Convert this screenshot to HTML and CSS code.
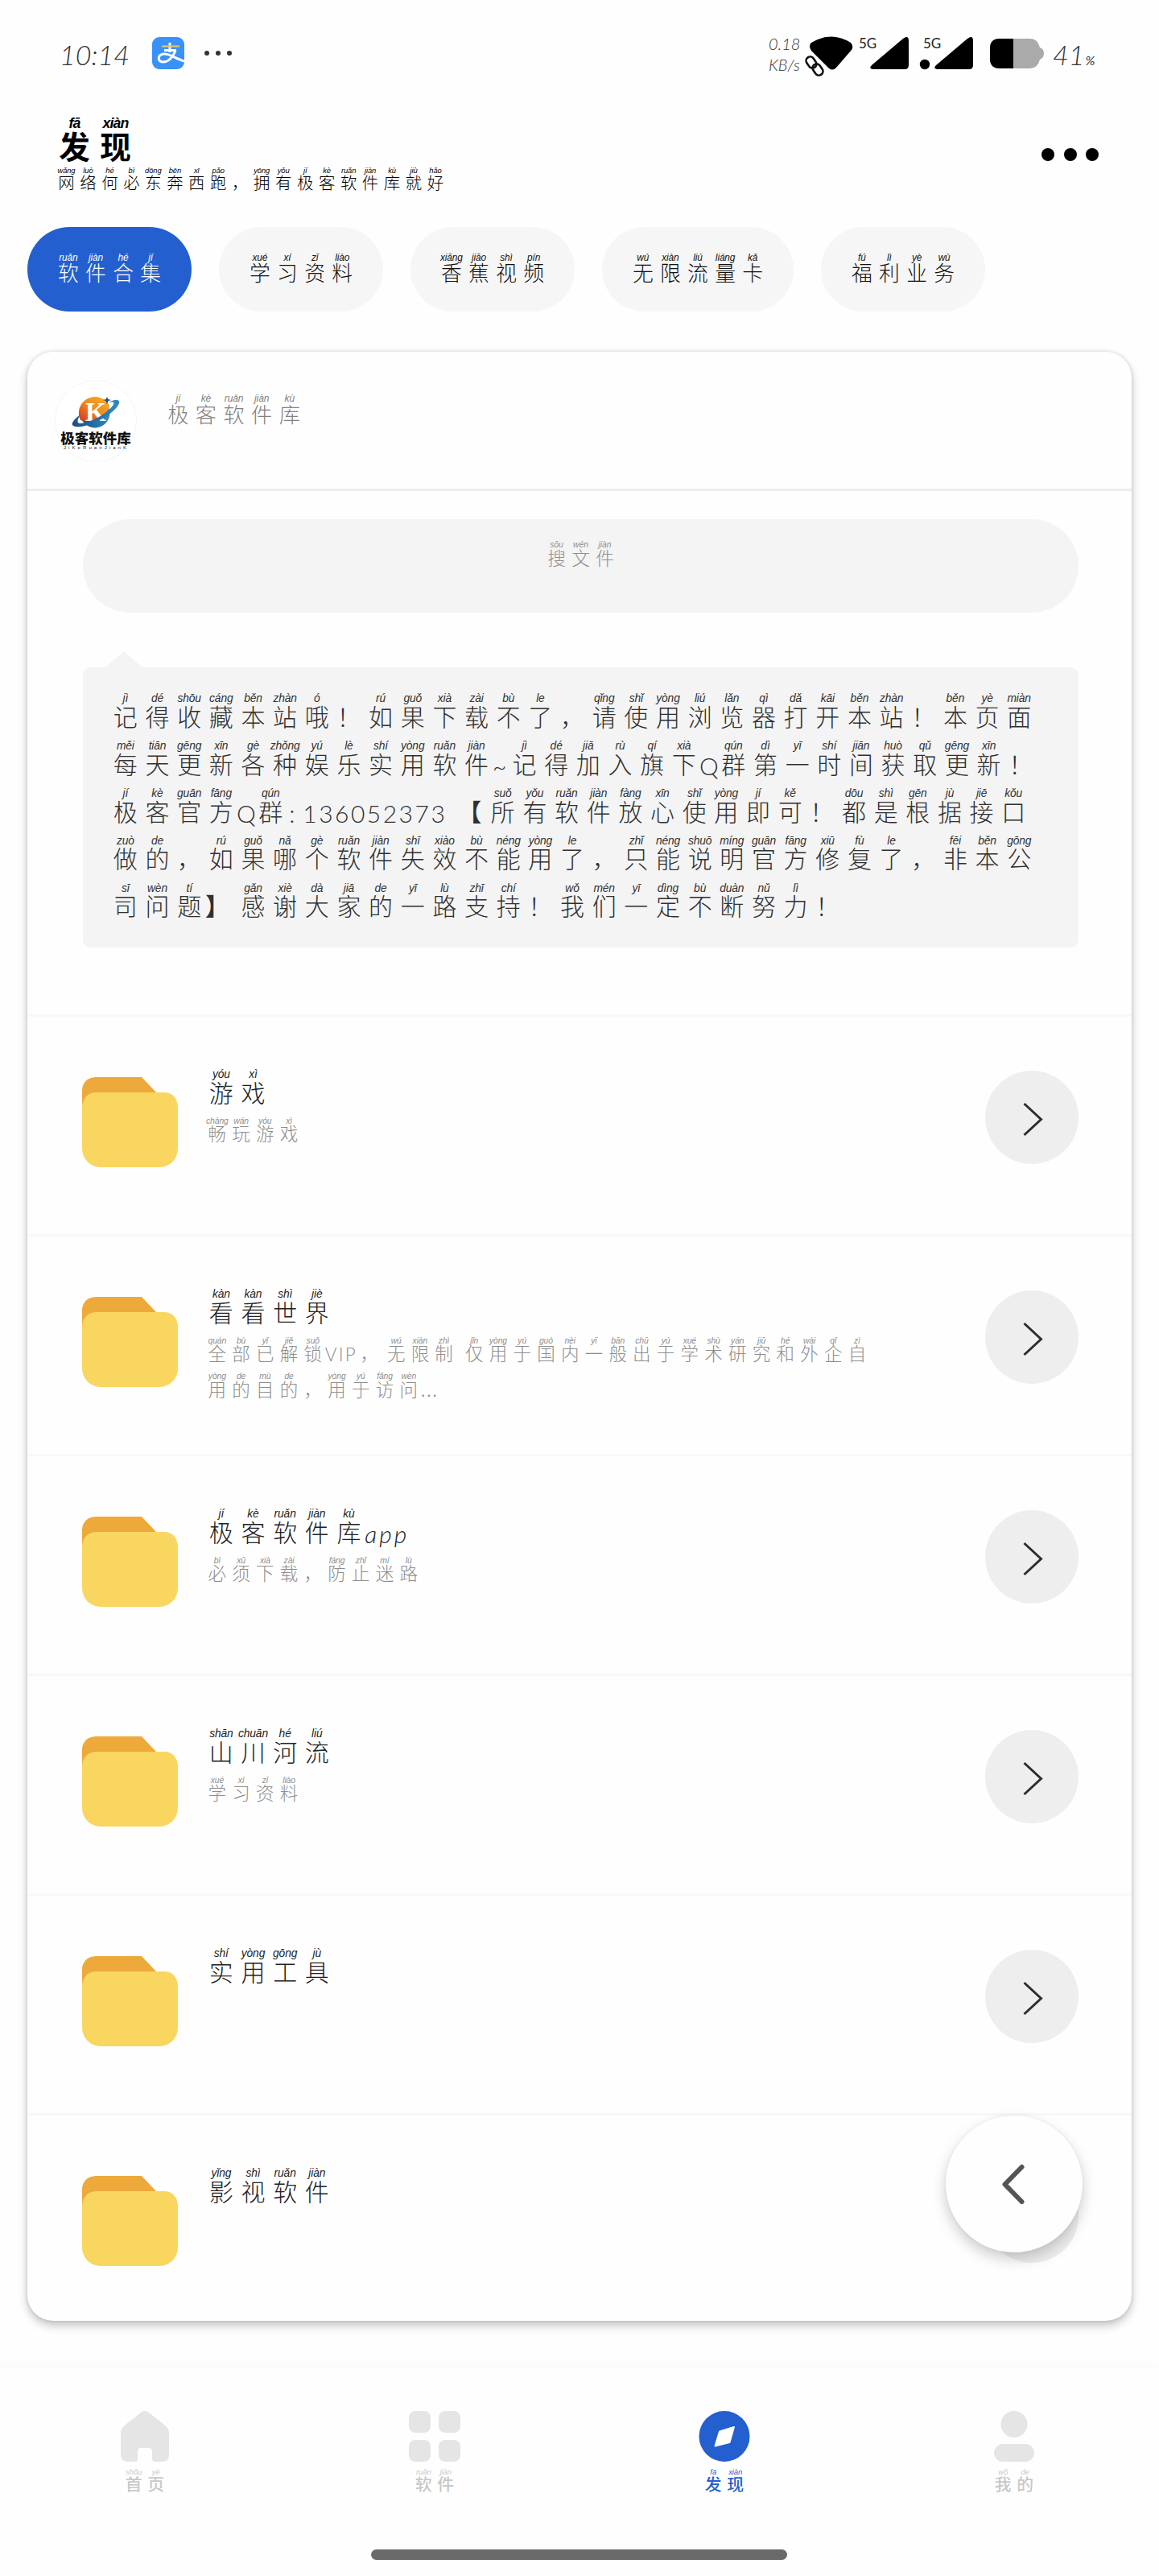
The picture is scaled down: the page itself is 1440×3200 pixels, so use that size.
FILE: index.html
```html
<!DOCTYPE html>
<html lang="zh-CN">
<head>
<meta charset="utf-8">
<title>发现</title>
<link rel="stylesheet" href="styles.css">
</head>
<body>
<div class="screen">
  <div class="status">
    <span class="clock">10:14</span>
    <svg class="pay" viewBox="0 0 40 40"><rect width="40" height="40" rx="9" fill="#3a92f8"/><path d="M22 7V19M15 16.500H30" stroke="#fff" stroke-width="3" fill="none"/><path d="M12 11.500H34" stroke="#e3c565" stroke-width="2.200"/><path d="M29 17C26 25 20 31 14 31C7 31 7 24 11 22C18 18 27 26 40 30" stroke="#fff" stroke-width="3" fill="none"/></svg>
    <span class="more-s"><i></i><i></i><i></i></span>
    <span class="speed"><span>0.18</span><span>KB/s</span></span>
    <svg class="sig" viewBox="0 0 302 56" width="302" height="56">
      <path d="M10 13Q35-2 59 13Q63 17 60 22L41 44Q36 49 31 44L10 23Q6 17 10 13Z" transform="translate(-1 0)"/>
      <g fill="none" stroke="#fefefe" stroke-width="8"><rect x="4" y="30" width="10" height="16" rx="5" transform="rotate(-35 9 38)"/></g>
      <g fill="none" stroke="#111" stroke-width="2.600"><rect x="4" y="30" width="10" height="15" rx="5" transform="rotate(-35 9 37.500)"/><rect x="12" y="39" width="10" height="15" rx="5" transform="rotate(-35 17 46.500)"/></g>
      <text x="68" y="20">5G</text><path d="M84 41L123 8Q130 3 130 11V41Q130 46 125 46H88Q79 46 84 41Z"/>
      <text x="148" y="20">5G</text><circle cx="150" cy="40" r="6.200"/><path d="M164 41L203 8Q210 3 210 11V41Q210 46 205 46H168Q159 46 164 41Z"/>
      <path d="M243 8H281Q290 8 293 19Q298 21 298 26Q298 32 293 34Q290 45 281 45H243Q231 45 231 33V20Q231 8 243 8Z" fill="#aaa"/><path d="M243 8H260V45H243Q231 45 231 33V20Q231 8 243 8Z"/>
    </svg>
    <span class="batt">41<small>%</small></span>
  </div>

  <header class="top">
    <div class="heads">
      <h1 class="py title"><ruby>发<rt>fā</rt></ruby><ruby>现<rt>xiàn</rt></ruby></h1>
      <p class="py sub"><ruby>网<rt>wǎng</rt></ruby><ruby>络<rt>luò</rt></ruby><ruby>何<rt>hé</rt></ruby><ruby>必<rt>bì</rt></ruby><ruby>东<rt>dōng</rt></ruby><ruby>奔<rt>bēn</rt></ruby><ruby>西<rt>xī</rt></ruby><ruby>跑<rt>pǎo</rt></ruby><b>，</b><ruby>拥<rt>yōng</rt></ruby><ruby>有<rt>yǒu</rt></ruby><ruby>极<rt>jí</rt></ruby><ruby>客<rt>kè</rt></ruby><ruby>软<rt>ruǎn</rt></ruby><ruby>件<rt>jiàn</rt></ruby><ruby>库<rt>kù</rt></ruby><ruby>就<rt>jiù</rt></ruby><ruby>好<rt>hǎo</rt></ruby></p>
    </div>
    <span class="menu"><i></i><i></i><i></i></span>
  </header>

  <nav class="chips">
    <a class="py chip on"><ruby>软<rt>ruǎn</rt></ruby><ruby>件<rt>jiàn</rt></ruby><ruby>合<rt>hé</rt></ruby><ruby>集<rt>jí</rt></ruby></a>
    <a class="py chip"><ruby>学<rt>xué</rt></ruby><ruby>习<rt>xí</rt></ruby><ruby>资<rt>zī</rt></ruby><ruby>料<rt>liào</rt></ruby></a>
    <a class="py chip"><ruby>香<rt>xiāng</rt></ruby><ruby>蕉<rt>jiāo</rt></ruby><ruby>视<rt>shì</rt></ruby><ruby>频<rt>pín</rt></ruby></a>
    <a class="py chip"><ruby>无<rt>wú</rt></ruby><ruby>限<rt>xiàn</rt></ruby><ruby>流<rt>liú</rt></ruby><ruby>量<rt>liáng</rt></ruby><ruby>卡<rt>kǎ</rt></ruby></a>
    <a class="py chip"><ruby>福<rt>fú</rt></ruby><ruby>利<rt>lì</rt></ruby><ruby>业<rt>yè</rt></ruby><ruby>务<rt>wù</rt></ruby></a>
  </nav>

  <main class="card">
    <div class="owner">
      <svg class="avatar" viewBox="0 0 102 102" width="102" height="102">
        <defs>
          <linearGradient id="g1" x1="1" y1="0" x2="0" y2="1"><stop offset="0" stop-color="#f7b41f"/><stop offset=".5" stop-color="#f08a24"/><stop offset="1" stop-color="#d8341c"/></linearGradient>
          <linearGradient id="g2" x1="0" y1="0" x2="1" y2="0"><stop offset="0" stop-color="#1d4f86"/><stop offset="1" stop-color="#2f8cc4"/></linearGradient>
        </defs>
        <circle cx="51" cy="51" r="50.500" fill="#fff" stroke="#f4f4f4"/>
        <circle cx="50" cy="41" r="18.500" fill="url(#g2)"/>
        <path d="M32 50A19 19 0 0 1 68 32Q66 42 56 47Q44 53 32 50Z" fill="url(#g1)"/>
        <text class="k" x="38" y="51">K</text>
        <path d="M32 43C22 50 18 57 26 58C43 60 75 42 80 29C82 23 73 24 67 28C73 26 75 28 72 32C64 43 42 54 31 54C27 53 28 49 32 43Z" fill="url(#g2)"/>
        <path d="M65 21L66.500 24L70 25L66.500 26L65 30L63.500 26L60 25L63.500 24Z" fill="#1d4f86"/>
        <text class="lg" x="51" y="79" text-anchor="middle">极客软件库</text>
        <text class="ls" x="11" y="86" textLength="78">JiKeRuanJianK</text>
      </svg>
      <div class="py name"><ruby>极<rt>jí</rt></ruby><ruby>客<rt>kè</rt></ruby><ruby>软<rt>ruǎn</rt></ruby><ruby>件<rt>jiàn</rt></ruby><ruby>库<rt>kù</rt></ruby></div>
    </div>

    <div class="py search"><ruby>搜<rt>sōu</rt></ruby><ruby>文<rt>wén</rt></ruby><ruby>件<rt>jiàn</rt></ruby></div>

    <div class="notice">
      <div class="py"><ruby>记<rt>jì</rt></ruby><ruby>得<rt>dé</rt></ruby><ruby>收<rt>shōu</rt></ruby><ruby>藏<rt>cáng</rt></ruby><ruby>本<rt>běn</rt></ruby><ruby>站<rt>zhàn</rt></ruby><ruby>哦<rt>ó</rt></ruby><b>！</b><ruby>如<rt>rú</rt></ruby><ruby>果<rt>guǒ</rt></ruby><ruby>下<rt>xià</rt></ruby><ruby>载<rt>zài</rt></ruby><ruby>不<rt>bù</rt></ruby><ruby>了<rt>le</rt></ruby><b>，</b><ruby>请<rt>qǐng</rt></ruby><ruby>使<rt>shǐ</rt></ruby><ruby>用<rt>yòng</rt></ruby><ruby>浏<rt>liú</rt></ruby><ruby>览<rt>lǎn</rt></ruby><ruby>器<rt>qì</rt></ruby><ruby>打<rt>dǎ</rt></ruby><ruby>开<rt>kāi</rt></ruby><ruby>本<rt>běn</rt></ruby><ruby>站<rt>zhàn</rt></ruby><b>！</b><ruby>本<rt>běn</rt></ruby><ruby>页<rt>yè</rt></ruby><ruby>面<rt>miàn</rt></ruby></div>
      <div class="py"><ruby>每<rt>měi</rt></ruby><ruby>天<rt>tiān</rt></ruby><ruby>更<rt>gēng</rt></ruby><ruby>新<rt>xīn</rt></ruby><ruby>各<rt>gè</rt></ruby><ruby>种<rt>zhǒng</rt></ruby><ruby>娱<rt>yú</rt></ruby><ruby>乐<rt>lè</rt></ruby><ruby>实<rt>shí</rt></ruby><ruby>用<rt>yòng</rt></ruby><ruby>软<rt>ruǎn</rt></ruby><ruby>件<rt>jiàn</rt></ruby><b class="half">~</b><ruby>记<rt>jì</rt></ruby><ruby>得<rt>dé</rt></ruby><ruby>加<rt>jiā</rt></ruby><ruby>入<rt>rù</rt></ruby><ruby>旗<rt>qí</rt></ruby><ruby>下<rt>xià</rt></ruby><b class="q">Q</b><ruby>群<rt>qún</rt></ruby><ruby>第<rt>dì</rt></ruby><ruby>一<rt>yī</rt></ruby><ruby>时<rt>shí</rt></ruby><ruby>间<rt>jiān</rt></ruby><ruby>获<rt>huò</rt></ruby><ruby>取<rt>qǔ</rt></ruby><ruby>更<rt>gēng</rt></ruby><ruby>新<rt>xīn</rt></ruby><b>！</b></div>
      <div class="py"><ruby>极<rt>jí</rt></ruby><ruby>客<rt>kè</rt></ruby><ruby>官<rt>guān</rt></ruby><ruby>方<rt>fāng</rt></ruby><b class="q">Q</b><ruby>群<rt>qún</rt></ruby><b class="colon">:</b><b class="num">136052373</b><b class="lb">【</b><ruby>所<rt>suǒ</rt></ruby><ruby>有<rt>yǒu</rt></ruby><ruby>软<rt>ruǎn</rt></ruby><ruby>件<rt>jiàn</rt></ruby><ruby>放<rt>fàng</rt></ruby><ruby>心<rt>xīn</rt></ruby><ruby>使<rt>shǐ</rt></ruby><ruby>用<rt>yòng</rt></ruby><ruby>即<rt>jí</rt></ruby><ruby>可<rt>kě</rt></ruby><b>！</b><ruby>都<rt>dōu</rt></ruby><ruby>是<rt>shì</rt></ruby><ruby>根<rt>gēn</rt></ruby><ruby>据<rt>jù</rt></ruby><ruby>接<rt>jiē</rt></ruby><ruby>口<rt>kǒu</rt></ruby></div>
      <div class="py"><ruby>做<rt>zuò</rt></ruby><ruby>的<rt>de</rt></ruby><b>，</b><ruby>如<rt>rú</rt></ruby><ruby>果<rt>guǒ</rt></ruby><ruby>哪<rt>nǎ</rt></ruby><ruby>个<rt>gè</rt></ruby><ruby>软<rt>ruǎn</rt></ruby><ruby>件<rt>jiàn</rt></ruby><ruby>失<rt>shī</rt></ruby><ruby>效<rt>xiào</rt></ruby><ruby>不<rt>bù</rt></ruby><ruby>能<rt>néng</rt></ruby><ruby>用<rt>yòng</rt></ruby><ruby>了<rt>le</rt></ruby><b>，</b><ruby>只<rt>zhǐ</rt></ruby><ruby>能<rt>néng</rt></ruby><ruby>说<rt>shuō</rt></ruby><ruby>明<rt>míng</rt></ruby><ruby>官<rt>guān</rt></ruby><ruby>方<rt>fāng</rt></ruby><ruby>修<rt>xiū</rt></ruby><ruby>复<rt>fù</rt></ruby><ruby>了<rt>le</rt></ruby><b>，</b><ruby>非<rt>fēi</rt></ruby><ruby>本<rt>běn</rt></ruby><ruby>公<rt>gōng</rt></ruby></div>
      <div class="py"><ruby>司<rt>sī</rt></ruby><ruby>问<rt>wèn</rt></ruby><ruby>题<rt>tí</rt></ruby><b class="rb">】</b><ruby>感<rt>gǎn</rt></ruby><ruby>谢<rt>xiè</rt></ruby><ruby>大<rt>dà</rt></ruby><ruby>家<rt>jiā</rt></ruby><ruby>的<rt>de</rt></ruby><ruby>一<rt>yī</rt></ruby><ruby>路<rt>lù</rt></ruby><ruby>支<rt>zhī</rt></ruby><ruby>持<rt>chí</rt></ruby><b>！</b><ruby>我<rt>wǒ</rt></ruby><ruby>们<rt>mén</rt></ruby><ruby>一<rt>yī</rt></ruby><ruby>定<rt>dìng</rt></ruby><ruby>不<rt>bù</rt></ruby><ruby>断<rt>duàn</rt></ruby><ruby>努<rt>nǔ</rt></ruby><ruby>力<rt>lì</rt></ruby><b>！</b></div>
    </div>

    <svg class="defs" width="0" height="0">
      <symbol id="folder" viewBox="0 0 119 112"><path d="M0 40V15Q2 1 17 0H74L92 19V40Z" fill="#eda93a"/><rect y="19" width="119" height="93" rx="23" fill="#f8d660"/><path d="M0 60V36Q2 20 17 19H103Q117 20 119 36V60Z" fill="#f8d660"/></symbol>
      <symbol id="go" viewBox="0 0 116 116"><circle cx="58" cy="58" r="58" fill="#eee"/><path d="M48.500 41L69.500 60.500L48.500 80" fill="none" stroke="#2d2d2d" stroke-width="3"/></symbol>
    </svg>

    <section class="row">
      <svg class="folder"><use href="#folder"/></svg>
      <div class="info">
        <div class="py t"><ruby>游<rt>yóu</rt></ruby><ruby>戏<rt>xì</rt></ruby></div>
        <div class="py d"><ruby>畅<rt>chàng</rt></ruby><ruby>玩<rt>wán</rt></ruby><ruby>游<rt>yóu</rt></ruby><ruby>戏<rt>xì</rt></ruby></div>
      </div>
      <svg class="go"><use href="#go"/></svg>
    </section>
    <section class="row">
      <svg class="folder"><use href="#folder"/></svg>
      <div class="info">
        <div class="py t"><ruby>看<rt>kàn</rt></ruby><ruby>看<rt>kàn</rt></ruby><ruby>世<rt>shì</rt></ruby><ruby>界<rt>jiè</rt></ruby></div>
        <div class="py d"><ruby>全<rt>quán</rt></ruby><ruby>部<rt>bù</rt></ruby><ruby>已<rt>yǐ</rt></ruby><ruby>解<rt>jiě</rt></ruby><ruby>锁<rt>suǒ</rt></ruby><b class="vip">VIP</b><b class="c2">，</b><ruby>无<rt>wú</rt></ruby><ruby>限<rt>xiàn</rt></ruby><ruby>制<rt>zhì</rt></ruby><b class="sp"></b><ruby>仅<rt>jǐn</rt></ruby><ruby>用<rt>yòng</rt></ruby><ruby>于<rt>yú</rt></ruby><ruby>国<rt>guó</rt></ruby><ruby>内<rt>nèi</rt></ruby><ruby>一<rt>yī</rt></ruby><ruby>般<rt>bān</rt></ruby><ruby>出<rt>chū</rt></ruby><ruby>于<rt>yú</rt></ruby><ruby>学<rt>xué</rt></ruby><ruby>术<rt>shù</rt></ruby><ruby>研<rt>yán</rt></ruby><ruby>究<rt>jiū</rt></ruby><ruby>和<rt>hé</rt></ruby><ruby>外<rt>wài</rt></ruby><ruby>企<rt>qǐ</rt></ruby><ruby>自<rt>zì</rt></ruby></div>
        <div class="py d next"><ruby>用<rt>yòng</rt></ruby><ruby>的<rt>de</rt></ruby><ruby>目<rt>mù</rt></ruby><ruby>的<rt>de</rt></ruby><b>，</b><ruby>用<rt>yòng</rt></ruby><ruby>于<rt>yú</rt></ruby><ruby>访<rt>fǎng</rt></ruby><ruby>问<rt>wèn</rt></ruby><b class="dots">...</b></div>
      </div>
      <svg class="go"><use href="#go"/></svg>
    </section>
    <section class="row">
      <svg class="folder"><use href="#folder"/></svg>
      <div class="info">
        <div class="py t"><ruby>极<rt>jí</rt></ruby><ruby>客<rt>kè</rt></ruby><ruby>软<rt>ruǎn</rt></ruby><ruby>件<rt>jiàn</rt></ruby><ruby>库<rt>kù</rt></ruby><b class="app">app</b></div>
        <div class="py d"><ruby>必<rt>bì</rt></ruby><ruby>须<rt>xū</rt></ruby><ruby>下<rt>xià</rt></ruby><ruby>载<rt>zài</rt></ruby><b>，</b><ruby>防<rt>fáng</rt></ruby><ruby>止<rt>zhǐ</rt></ruby><ruby>迷<rt>mí</rt></ruby><ruby>路<rt>lù</rt></ruby></div>
      </div>
      <svg class="go"><use href="#go"/></svg>
    </section>
    <section class="row">
      <svg class="folder"><use href="#folder"/></svg>
      <div class="info">
        <div class="py t"><ruby>山<rt>shān</rt></ruby><ruby>川<rt>chuān</rt></ruby><ruby>河<rt>hé</rt></ruby><ruby>流<rt>liú</rt></ruby></div>
        <div class="py d"><ruby>学<rt>xué</rt></ruby><ruby>习<rt>xí</rt></ruby><ruby>资<rt>zī</rt></ruby><ruby>料<rt>liào</rt></ruby></div>
      </div>
      <svg class="go"><use href="#go"/></svg>
    </section>
    <section class="row">
      <svg class="folder"><use href="#folder"/></svg>
      <div class="info">
        <div class="py t"><ruby>实<rt>shí</rt></ruby><ruby>用<rt>yòng</rt></ruby><ruby>工<rt>gōng</rt></ruby><ruby>具<rt>jù</rt></ruby></div>
      </div>
      <svg class="go"><use href="#go"/></svg>
    </section>
    <section class="row">
      <svg class="folder"><use href="#folder"/></svg>
      <div class="info">
        <div class="py t"><ruby>影<rt>yǐng</rt></ruby><ruby>视<rt>shì</rt></ruby><ruby>软<rt>ruǎn</rt></ruby><ruby>件<rt>jiàn</rt></ruby></div>
      </div>
      <svg class="go"><use href="#go"/></svg>
    </section>
  </main>

  <button class="fab" aria-label="返回"><svg viewBox="0 0 170 170" width="170" height="170"><path d="M94.500 64L73.500 85.500L94.500 107" fill="none" stroke="#555" stroke-width="6" stroke-linecap="round" stroke-linejoin="round"/></svg></button>

  <nav class="tabs">
    <a class="tab"><svg viewBox="0 0 64 64"><path d="M27 2Q32-2 37 2L56 17Q62 21 62 28V54Q62 63 53 63H45Q41 63 41 59V50Q41 46 37 46H27Q23 46 23 50V59Q23 63 19 63H11Q2 63 2 54V28Q2 21 8 17Z"/></svg><span class="py"><ruby>首<rt>shǒu</rt></ruby><ruby>页<rt>yè</rt></ruby></span></a>
    <a class="tab"><svg viewBox="0 0 64 64"><rect y="0" width="27" height="27" rx="8"/><rect x="37" y="0" width="27" height="27" rx="8"/><rect y="36" width="27" height="27" rx="8"/><rect x="37" y="36" width="27" height="27" rx="8"/></svg><span class="py"><ruby>软<rt>ruǎn</rt></ruby><ruby>件<rt>jiàn</rt></ruby></span></a>
    <a class="tab on"><svg viewBox="0 0 64 64"><circle cx="32" cy="31.500" r="31.500"/><path d="M44 20L38.500 39L20.500 43.500L26 25.500Z" fill="#fff" stroke="#fff" stroke-width="2" stroke-linejoin="round"/></svg><span class="py"><ruby>发<rt>fā</rt></ruby><ruby>现<rt>xiàn</rt></ruby></span></a>
    <a class="tab"><svg viewBox="0 0 64 64"><circle cx="32" cy="16.500" r="16.500"/><rect x="7" y="41" width="50" height="22" rx="11"/></svg><span class="py"><ruby>我<rt>wǒ</rt></ruby><ruby>的<rt>de</rt></ruby></span></a>
  </nav>
  <div class="homebar"></div>
</div>
</body>
</html>
```
FILE: styles.css
```css
* { box-sizing: border-box; }
body {
  margin: 0;
  background: #fefefe;
  color: #111;
  font-family: "Liberation Sans", "Noto Sans CJK SC", sans-serif;
  font-weight: 300;
}
.screen {
  position: relative;
  width: 1440px;
  height: 3200px;
  display: flex;
  flex-direction: column;
  overflow: hidden;
}
svg { display: block; flex: none; }
i { display: block; border-radius: 50%; background: currentColor; }

/* annotated text: each character sits in a cell with its reading above */
.py {
  --cell: 1.322em;
  display: flex;
  align-items: flex-end;
  height: 1.5em;
  margin: 0;
  line-height: 1;
  font-weight: 300;
  white-space: nowrap;
}
.py ruby {
  display: flex;
  flex-direction: column-reverse;
  align-items: center;
  width: var(--cell);
  height: 1.5em;
  flex: none;
}
.py rt {
  display: block;
  font: italic 400 0.46em/1.12 "Liberation Sans", sans-serif;
  letter-spacing: -0.01em;
  margin-bottom: 0.08em;
}
.py b { width: var(--cell); flex: none; font-weight: 300; text-indent: 0.16em; }

/* status bar */
.status { height: 130px; padding: 0 70px 0 74px; display: flex; align-items: flex-start; color: #333; }
.clock { width: 115px; margin-top: 47px; font: italic 300 34px/42px Lato, sans-serif; }
.pay { width: 40px; height: 40px; margin-top: 46px; }
.more-s { display: flex; gap: 8px; margin: 63px auto 0 25px; }
.more-s i { width: 6px; height: 6px; }
.speed { display: flex; flex-direction: column; width: 44px; margin-top: 41px; font: italic 300 20px/26px Lato, sans-serif; }
.sig { margin-top: 40px; fill: #000; }
.sig text { font: 400 17px Lato, sans-serif; fill: #222; }
.batt { width: 62px; margin: 47px 0 0 7px; font: italic 300 34px/42px Lato, sans-serif; white-space: nowrap; }
.batt small { font-size: 16px; font-weight: 400; margin-left: 1px; }

/* heading */
.top { height: 152px; padding: 16px 75px 0 67px; display: flex; justify-content: space-between; color: #000; }
.title { font-size: 38.600px; font-weight: 700; }
.title rt { font-weight: 700; letter-spacing: -0.05em; }
.sub { font-size: 20.400px; margin: 4px 0 0 2px; }
.menu { display: flex; gap: 11.500px; margin-top: 38px; }
.menu i { width: 16px; height: 16px; }

.chips { display: flex; gap: 34px; padding-left: 34px; height: 155px; }
.chip { height: 105px; width: 204px; border-radius: 53px; background: #f6f6f6; font-size: 25.800px; justify-content: center; align-items: center; }
.chip:nth-child(4) { width: 238px; }
.chip.on { background: #235fcf; color: #fff; }

/* card */
.card {
  width: 1372px;
  height: 2446px;
  margin-left: 34px;
  border-radius: 32px;
  background: #fefefe;
  box-shadow: 0 6px 12px rgba(0, 0, 0, .22), 0 0 5px rgba(0, 0, 0, .14);
  overflow: hidden;
  flex: none;
}
.owner { height: 173px; padding: 35px 0 0 34px; display: flex; align-items: flex-start; gap: 34px; border-bottom: 3px solid #eee; }
.k { font: 700 33px "Liberation Serif", serif; fill: #fff; }
.lg { font: 900 17.500px "Noto Sans CJK SC", sans-serif; fill: #111; }
.ls { font: 400 6px "Liberation Sans", sans-serif; fill: #222; }
.name { margin-top: 18px; font-size: 26.200px; color: #808080; }
.search { height: 116px; margin: 35px 66px 0 69px; padding-top: 27px; border-radius: 58px; background: #f4f4f4; font-size: 22.700px; justify-content: center; align-items: flex-start; color: #909090; }
.notice { position: relative; height: 348px; margin: 68px 66px 83px 69px; padding: 33px 0 0 33px; border-radius: 9px; background: #f4f4f4; font-size: 30px; color: #303030; display: flex; flex-direction: column; gap: 13.800px; }
.notice::before { content: ""; position: absolute; left: 27px; top: -20px; border: solid transparent; border-width: 0 24px 21px; border-bottom-color: #f4f4f4; }
.half, .q, .colon, .num, .vip, .app { font-family: Lato, sans-serif; }
.py .half { width: .66em; text-indent: 0; }
.py .q { width: .73em; text-indent: -.02em; }
.py .colon { width: .67em; text-indent: .1em; }
.py .num { width: 6.300em; text-indent: 0; letter-spacing: .083em; }
.py .lb { text-indent: .1em; font-weight: 700; }
.py .rb { text-indent: 0; font-weight: 700; }
.defs { position: absolute; }

.row { height: 273px; border-top: 3px solid #f8f8f8; padding: 0 66px 0 68px; display: flex; align-items: flex-start; }
.folder { width: 119px; height: 112px; margin-top: 75px; }
.info { flex: 1; padding: 66px 0 0 34px; }
.t { font-size: 30px; color: #222; }
.d { font-size: 22.500px; margin-top: 14px; color: #8e8e8e; }
.d.next { margin-top: 10.600px; }
.go { width: 116px; height: 116px; margin-top: 67px; }
.py .vip { width: 1.950em; text-indent: 0; letter-spacing: .1em; }
.py .c2 { text-indent: 0; }
.py .sp { width: .35em; }
.py .dots { text-indent: 0; letter-spacing: .04em; }
.py .app { text-indent: 0; font-style: italic; letter-spacing: .1em; }

.fab { position: absolute; left: 1175px; top: 2628px; width: 170px; height: 170px; padding: 0; border: 0; border-radius: 50%; background: #fefefe; box-shadow: 0 8px 18px rgba(0, 0, 0, .2), 0 0 4px rgba(0, 0, 0, .05); }

/* bottom tabs */
.tabs { height: 225px; margin-top: 59px; padding-top: 53px; display: grid; grid-template-columns: repeat(4, 1fr); background: #fefefe; box-shadow: 0 -6px 16px rgba(0, 0, 0, .025); flex: none; }
.tab { display: flex; flex-direction: column; align-items: center; gap: 8px; color: #c8c8c8; }
.tab svg { width: 64px; height: 64px; fill: #e5e5e5; }
.tab .py { font-size: 20.800px; font-weight: 500; }
.tab.on { color: #235fcf; }
.tab.on svg { fill: #235fcf; }
.homebar { width: 517px; height: 13px; margin-left: 461px; border-radius: 7px; background: #6a6a6a; flex: none; }
```
